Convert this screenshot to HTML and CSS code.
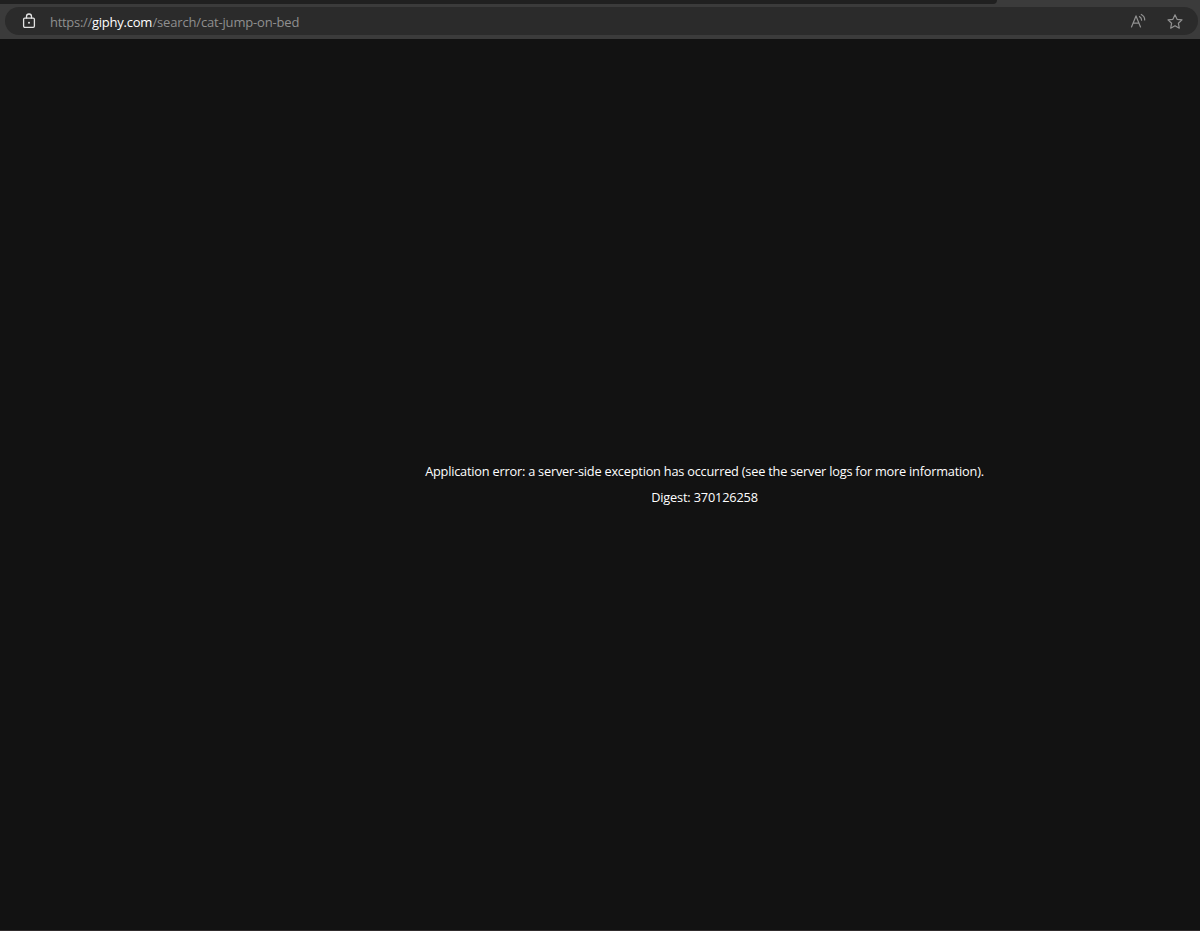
FILE: index.html
```html
<!DOCTYPE html>
<html lang="en">
<head>
<meta charset="utf-8">
<title>giphy.com</title>
<link rel="stylesheet" href="styles.css">
</head>
<body>
<header class="browser">
  <div class="tab-edge"></div>
  <div class="address">
    <svg class="lock" width="14" height="16" viewBox="0 0 14 16"><rect x="1.6" y="5.1" width="10.8" height="9.2" rx="1.2"/><path d="M4.5 5V3.5a2.5 2.5 0 0 1 5 0V5"/><circle cx="7" cy="9.7" r="1"/></svg>
    <div class="url"><span class="scheme">https://</span><span class="host">giphy.com</span><span class="path">/search/cat-jump-on-bed</span></div>
    <svg class="read" width="16" height="16" viewBox="0 0 16 16"><path d="M1.5 13.9 6 2.9 10.5 13.9M3.1 10.1h5.8M9.5 3.6q2.1 1.1 2.1 3.6M11.3 1.5q3.5 1.9 3.4 5.5"/></svg>
    <svg class="star" width="16" height="16" viewBox="0 -.7 16 16"><path d="M8 1.1 10.1 5.6 15 6.2 11.4 9.6 12.3 14.5 8 12.1 3.7 14.5 4.6 9.6 1 6.2 5.9 5.6Z"/></svg>
  </div>
</header>
<main class="page">
  <div class="message">
    <p class="error">Application error: a server-side exception has occurred (see the server logs for more information).</p>
    <p class="digest">Digest: 370126258</p>
  </div>
</main>
</body>
</html>
```
FILE: styles.css
```css
* { box-sizing: border-box; }
body {
  margin: 0;
  height: 931px;
  display: flex;
  flex-direction: column;
  overflow: hidden;
  background: #121212;
  font: 13px/18px "Segoe UI", "Open Sans", "Noto Sans", sans-serif;
}
.browser { height: 39px; background: #3b3b3b; padding-right: 2px; }
.tab-edge { width: 997px; height: 4px; background: #202020; border-bottom-right-radius: 4px; }
.address {
  display: flex;
  align-items: center;
  height: 28px;
  margin: 3px 0 0 5px;
  padding: 0 15px 0 17px;
  border-radius: 14px;
  background: #2b2b2b;
}
svg { flex: none; fill: none; stroke-linejoin: round; stroke-linecap: round; }
.lock { stroke: #e4e4e4; stroke-width: 1.3; }
.lock circle { fill: #e4e4e4; stroke: none; }
.url { margin-left: 14px; padding-top: 1px; white-space: nowrap; color: #8f8f8f; display: flex; }
.scheme { width: 42px; letter-spacing: -0.3px; }
.host { width: 60.5px; color: #fff; letter-spacing: -0.24px; }
.path { letter-spacing: -0.17px; }
.read { margin-left: auto; stroke: #929292; stroke-width: 1.2; }
.star { margin-left: 21px; stroke: #929292; stroke-width: 1.2; }
.page {
  flex: 1;
  padding: 423px 0 0 208px;
  border-bottom: 1px solid #302c2d;
  color: #fff;
}
.message { width: 993px; text-align: center; white-space: nowrap; font-size: 12.75px; }
.message p { margin: 0 0 8px; }
.error { letter-spacing: -0.21px; }
.digest { letter-spacing: -0.17px; }
```
